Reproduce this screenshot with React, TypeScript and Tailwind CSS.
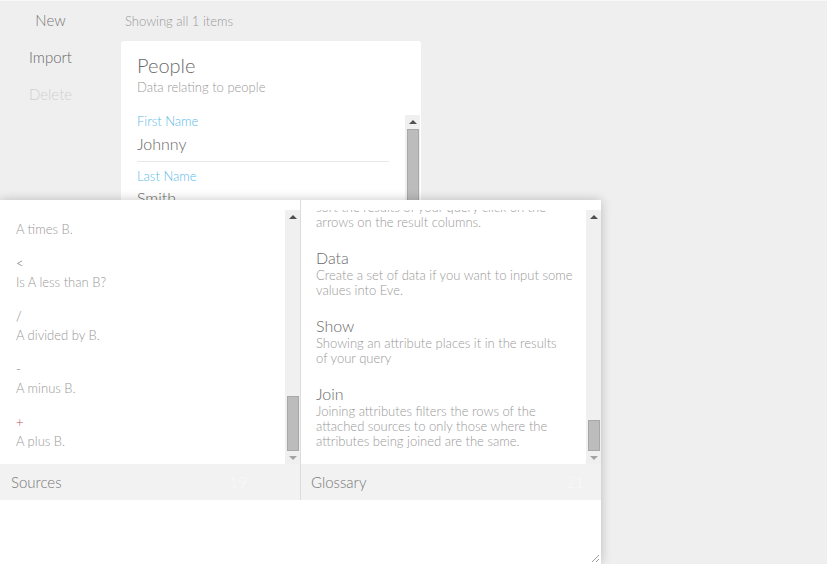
import React from 'react';

interface Operator {
    symbol: string;
    text: string;
    red?: boolean;
}

const operators: Operator[] = [
    { symbol: '*', text: 'A times B.' },
    { symbol: '<', text: 'Is A less than B?' },
    { symbol: '/', text: 'A divided by B.' },
    { symbol: '-', text: 'A minus B.' },
    { symbol: '+', text: 'A plus B.', red: true },
];

interface Term {
    title: string;
    lines: string[];
}

const glossary: Term[] = [
    { title: 'Sort', lines: ['sort the results of your query click on the', 'arrows on the result columns.'] },
    { title: 'Data', lines: ['Create a set of data if you want to input some', 'values into Eve.'] },
    { title: 'Show', lines: ['Showing an attribute places it in the results', 'of your query'] },
    { title: 'Join', lines: ['Joining attributes filters the rows of the', 'attached sources to only those where the', 'attributes being joined are the same.'] },
];

const UpArrow = () => (
    <div className="w-0 h-0 border-x-[4px] border-x-transparent border-b-[4px] border-b-[#505050]" />
);

const DownArrow = () => (
    <div className="w-0 h-0 border-x-[4px] border-x-transparent border-t-[4px] border-t-[#a3a3a3]" />
);

function Scrollbar({ thumbClass, showDown = true }: { thumbClass: string; showDown?: boolean }) {
    return (
        <div className="w-[15px] h-full bg-[#f0f0f0] flex flex-col items-center shrink-0">
            <div className="h-[14px] flex items-center justify-center shrink-0">
                <UpArrow />
            </div>
            <div className="flex-1 w-full flex flex-col items-center">
                <div className={'w-[12px] bg-[#bcbcbc] border border-[#a8a8a8] ' + thumbClass} />
            </div>
            {showDown && (
                <div className="h-[13px] flex items-center justify-center shrink-0">
                    <DownArrow />
                </div>
            )}
        </div>
    );
}

function Sidebar() {
    return (
        <div className="w-[101px] shrink-0 flex flex-col items-center text-[15px] pt-[9px]">
            <div className="h-[37px] leading-[20px] text-[#777]">New</div>
            <div className="h-[37px] leading-[20px] text-[#666]">Import</div>
            <div className="h-[37px] leading-[20px] text-[#cfcfcf]">Delete</div>
        </div>
    );
}

function PeopleCard() {
    return (
        <div className="w-[300px] h-[400px] bg-white rounded-[3px] mt-[11px] ml-[20px] flex flex-col">
            <div className="px-4 pt-[12px] h-[74px] shrink-0">
                <div className="text-[20px] leading-[24px] text-[#6a6a6a]">People</div>
                <div className="text-[13px] leading-[18px] text-[#999] mt-[1px]">Data relating to people</div>
            </div>
            <div className="flex flex-1 pr-[1px]">
                <div className="flex-1 pl-4 pr-4">
                    <div className="text-[13px] leading-[18px] text-[#5cbbe9] mt-[-3px]">First Name</div>
                    <div className="text-[16px] leading-[24px] text-[#666] mt-[2px]">Johnny</div>
                    <div className="h-px bg-[#e8e8e8] mt-[5px]" />
                    <div className="text-[13px] leading-[18px] text-[#5cbbe9] mt-[5px]">Last Name</div>
                    <div className="text-[16px] leading-[24px] text-[#666] mt-[1px]">Smith</div>
                </div>
                <Scrollbar thumbClass="mt-[0px] h-[200px]" showDown={false} />
            </div>
        </div>
    );
}

function OperatorList() {
    return (
        <div className="flex-1 overflow-hidden">
            <div className="mt-[-9px] pl-4">
                {operators.map((op, i) => (
                    <div key={i} className="mb-[15px] text-[13px] leading-[19px]">
                        <div className={op.red ? 'text-[#c45050]' : 'text-[#777]'}>{op.symbol}</div>
                        <div className="text-[#999]">{op.text}</div>
                    </div>
                ))}
            </div>
        </div>
    );
}

function GlossaryList() {
    return (
        <div className="flex-1 overflow-hidden">
            <div className="mt-[-30px] pl-[15px]">
                {glossary.map((term) => (
                    <div key={term.title} className="mb-[18px]">
                        <div className="text-[16px] leading-[20px] text-[#6a6a6a]">{term.title}</div>
                        {term.lines.map((line) => (
                            <div key={line} className="text-[13px] leading-[15px] text-[#999] whitespace-nowrap">
                                {line}
                            </div>
                        ))}
                    </div>
                ))}
            </div>
        </div>
    );
}

function HelperPanel() {
    return (
        <div className="absolute left-0 bottom-0 w-[601px] h-[364px] bg-white shadow-[0_0_10px_rgba(0,0,0,0.22)] flex flex-col">
            <div className="flex h-[300px] shrink-0">
                <div className="w-[301px] flex flex-col border-r border-[#dcdcdc]">
                    <div className="flex h-[264px] pt-[10px]">
                        <OperatorList />
                        <Scrollbar thumbClass="mt-[172px] h-[55px]" />
                    </div>
                    <div className="h-[36px] bg-[#f2f2f2] flex items-center justify-between pl-[11px] pr-[53px]">
                        <span className="text-[15px] text-[#777]">Sources</span>
                        <span className="text-[15px] text-[#f9f9f9]">19</span>
                    </div>
                </div>
                <div className="flex-1 flex flex-col">
                    <div className="flex h-[264px] pt-[10px]">
                        <GlossaryList />
                        <Scrollbar thumbClass="mt-[196px] h-[31px]" />
                    </div>
                    <div className="h-[36px] bg-[#f2f2f2] flex items-center justify-between pl-[10px] pr-[17px]">
                        <span className="text-[15px] text-[#777]">Glossary</span>
                        <span className="text-[15px] text-[#f9f9f9]">21</span>
                    </div>
                </div>
            </div>
            <div className="flex-1 flex items-end justify-end p-[2px]">
                <svg width="8" height="8" viewBox="0 0 8 8">
                    <line x1="1" y1="8" x2="8" y2="1" stroke="#9a9a9a" strokeWidth="1" />
                    <line x1="5" y1="8" x2="8" y2="5" stroke="#9a9a9a" strokeWidth="1" />
                </svg>
            </div>
        </div>
    );
}

export default function App() {
    return (
        <div
            className="relative w-[827px] h-[564px] overflow-hidden bg-[#efefef] border-t border-[#f8f8f8] font-light"
            style={{ fontFamily: 'Lato, "Open Sans", sans-serif' }}
        >
            <div className="flex">
                <Sidebar />
                <div className="flex flex-col">
                    <div className="pl-[24px] pt-[11px] text-[13px] leading-[18px] text-[#999]">Showing all 1 items</div>
                    <PeopleCard />
                </div>
            </div>
            <HelperPanel />
        </div>
    );
}
